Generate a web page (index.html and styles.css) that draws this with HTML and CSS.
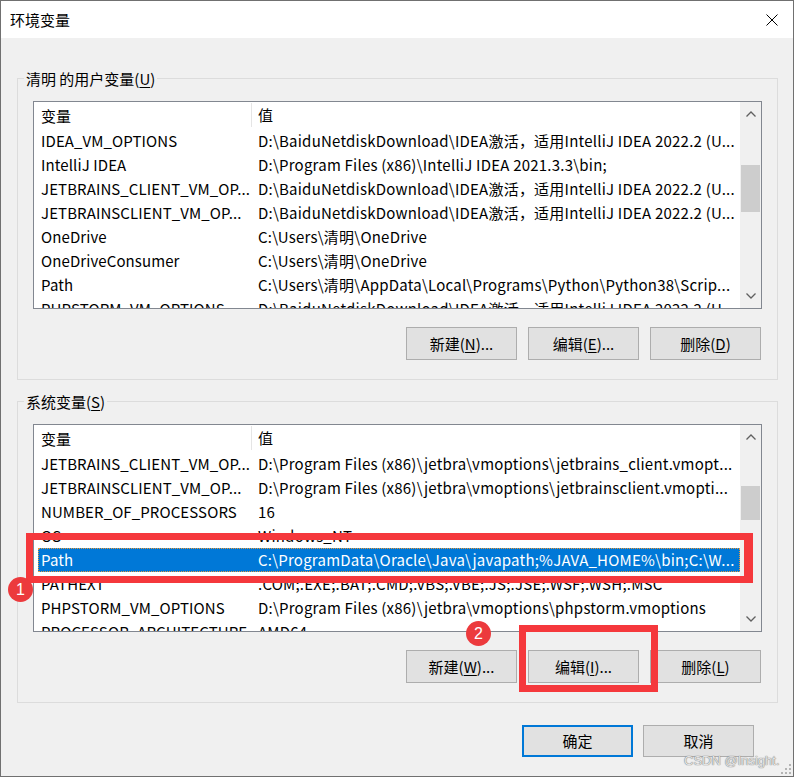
FILE: index.html
```html
<!DOCTYPE html>
<html lang="zh-CN">
<head>
<meta charset="utf-8">
<title>环境变量</title>
<link rel="stylesheet" href="styles.css">
</head>
<body>
<div class="window">
  <div class="titlebar">
    <span class="title">环境变量</span>
    <span class="close"><svg width="12" height="12" viewBox="0 0 12 12"><path d="M0.5 0.5 L11.5 11.5 M11.5 0.5 L0.5 11.5" stroke="#000" stroke-width="1" fill="none"/></svg></span>
  </div>
  <div class="body">
    <fieldset class="group">
      <legend>清明 的用户变量(<u>U</u>)</legend>
      <div class="list">
        <div class="table">
          <div class="row head"><span class="c1">变量</span><span class="c2">值</span></div>
          <div class="row"><span class="c1">IDEA_VM_OPTIONS</span><span class="c2">D:\BaiduNetdiskDownload\IDEA激活，适用IntelliJ IDEA 2022.2 (U...</span></div>
          <div class="row"><span class="c1">IntelliJ IDEA</span><span class="c2">D:\Program Files (x86)\IntelliJ IDEA 2021.3.3\bin;</span></div>
          <div class="row"><span class="c1">JETBRAINS_CLIENT_VM_OP...</span><span class="c2">D:\BaiduNetdiskDownload\IDEA激活，适用IntelliJ IDEA 2022.2 (U...</span></div>
          <div class="row"><span class="c1">JETBRAINSCLIENT_VM_OP...</span><span class="c2">D:\BaiduNetdiskDownload\IDEA激活，适用IntelliJ IDEA 2022.2 (U...</span></div>
          <div class="row"><span class="c1">OneDrive</span><span class="c2">C:\Users\清明\OneDrive</span></div>
          <div class="row"><span class="c1">OneDriveConsumer</span><span class="c2">C:\Users\清明\OneDrive</span></div>
          <div class="row"><span class="c1">Path</span><span class="c2">C:\Users\清明\AppData\Local\Programs\Python\Python38\Scrip...</span></div>
          <div class="row"><span class="c1">PHPSTORM_VM_OPTIONS</span><span class="c2">D:\BaiduNetdiskDownload\IDEA激活，适用IntelliJ IDEA 2022.2 (U...</span></div>
        </div>
        <div class="scrollbar">
          <div class="arrow"><svg width="10" height="6" viewBox="0 0 10 6"><path d="M0.5 5.5 L5 1 L9.5 5.5" stroke="#606060" stroke-width="1.3" fill="none"/></svg></div>
          <div class="track"><div class="thumb" style="margin-top:39px;height:47px"></div></div>
          <div class="arrow"><svg width="10" height="6" viewBox="0 0 10 6"><path d="M0.5 0.5 L5 5 L9.5 0.5" stroke="#606060" stroke-width="1.3" fill="none"/></svg></div>
        </div>
      </div>
      <div class="buttons">
        <button class="btn">新建(<u>N</u>)...</button>
        <button class="btn">编辑(<u>E</u>)...</button>
        <button class="btn">删除(<u>D</u>)</button>
      </div>
    </fieldset>

    <fieldset class="group group-sys">
      <legend>系统变量(<u>S</u>)</legend>
      <div class="list">
        <div class="table">
          <div class="row head"><span class="c1">变量</span><span class="c2">值</span></div>
          <div class="row"><span class="c1">JETBRAINS_CLIENT_VM_OP...</span><span class="c2">D:\Program Files (x86)\jetbra\vmoptions\jetbrains_client.vmopt...</span></div>
          <div class="row"><span class="c1">JETBRAINSCLIENT_VM_OP...</span><span class="c2">D:\Program Files (x86)\jetbra\vmoptions\jetbrainsclient.vmopti...</span></div>
          <div class="row"><span class="c1">NUMBER_OF_PROCESSORS</span><span class="c2">16</span></div>
          <div class="row"><span class="c1">OS</span><span class="c2">Windows_NT</span></div>
          <div class="row selected"><span class="c1">Path</span><span class="c2">C:\ProgramData\Oracle\Java\javapath;%JAVA_HOME%\bin;C:\W...</span></div>
          <div class="row"><span class="c1">PATHEXT</span><span class="c2">.COM;.EXE;.BAT;.CMD;.VBS;.VBE;.JS;.JSE;.WSF;.WSH;.MSC</span></div>
          <div class="row"><span class="c1">PHPSTORM_VM_OPTIONS</span><span class="c2">D:\Program Files (x86)\jetbra\vmoptions\phpstorm.vmoptions</span></div>
          <div class="row"><span class="c1">PROCESSOR_ARCHITECTURE</span><span class="c2">AMD64</span></div>
        </div>
        <div class="scrollbar">
          <div class="arrow"><svg width="10" height="6" viewBox="0 0 10 6"><path d="M0.5 5.5 L5 1 L9.5 5.5" stroke="#606060" stroke-width="1.3" fill="none"/></svg></div>
          <div class="track"><div class="thumb" style="margin-top:37px;height:34px"></div></div>
          <div class="arrow"><svg width="10" height="6" viewBox="0 0 10 6"><path d="M0.5 0.5 L5 5 L9.5 0.5" stroke="#606060" stroke-width="1.3" fill="none"/></svg></div>
        </div>
      </div>
      <div class="buttons">
        <button class="btn">新建(<u>W</u>)...</button>
        <button class="btn">编辑(<u>I</u>)...</button>
        <button class="btn">删除(<u>L</u>)</button>
      </div>
    </fieldset>

    <div class="footer">
      <button class="btn primary">确定</button>
      <button class="btn">取消</button>
    </div>
  </div>

  <div class="mark mark-row"></div>
  <div class="mark mark-btn"></div>
  <span class="badge badge-1">1</span>
  <span class="badge badge-2">2</span>
  <span class="watermark">CSDN @Insight.</span>
  <svg class="grip" width="12" height="12" viewBox="0 0 12 12">
    <rect x="9" y="1" width="2" height="2" fill="#b4b4b4"/>
    <rect x="5" y="5" width="2" height="2" fill="#b4b4b4"/>
    <rect x="9" y="5" width="2" height="2" fill="#b4b4b4"/>
    <rect x="1" y="9" width="2" height="2" fill="#b4b4b4"/>
    <rect x="5" y="9" width="2" height="2" fill="#b4b4b4"/>
    <rect x="9" y="9" width="2" height="2" fill="#b4b4b4"/>
  </svg>
</div>
</body>
</html>
```

FILE: styles.css
```css
* { box-sizing: border-box; }

html, body {
  margin: 0;
  padding: 0;
  background: #f0f0f0;
}

body {
  font-family: "Noto Sans CJK SC", "Noto Sans", sans-serif;
  font-size: 15px;
  color: #000;
}

.window {
  position: relative;
  width: 794px;
  height: 777px;
  border: 1px solid #707070;
  background: #f0f0f0;
  overflow: hidden;
}

.titlebar {
  height: 37px;
  background: #fff;
  display: flex;
  align-items: center;
  justify-content: space-between;
  padding-left: 9px;
}

.title {
  font-size: 15px;
  line-height: 20px;
}

.close {
  width: 42px;
  height: 37px;
  display: flex;
  align-items: center;
  justify-content: center;
}

.close svg { display: block; }

.body {
  padding: 30px 15px 0 16px;
}

.group {
  margin: 0;
  min-width: 0;
  border: 1px solid #dcdcdc;
  padding: 12px 15px 19px 15px;
}

.group-sys {
  margin-top: 11px;
}

.group legend {
  margin-left: -9px;
  padding: 0 2px;
  line-height: 21px;
  height: 21px;
  font-size: 15px;
}

u { text-decoration: underline; text-underline-offset: 2px; }

.list {
  height: 208px;
  border: 1px solid #828790;
  background: #fff;
  display: flex;
}

.table {
  flex: 1;
  min-width: 0;
  overflow: hidden;
}

.row {
  display: grid;
  grid-template-columns: 213px 1fr;
  margin-left: 4px;
  height: 24px;
  line-height: 24px;
  white-space: nowrap;
}

.row .c1 {
  padding-left: 3px;
  overflow: hidden;
  text-overflow: clip;
  letter-spacing: 0.1px;
}

.row .c2 {
  padding-left: 7px;
  overflow: hidden;
  text-overflow: clip;
  letter-spacing: 0.22px;
}

.row.head {
  height: 27px;
  line-height: 27px;
}

.row.head .c2 {
  border-left: 1px solid #e5e5e5;
  padding-left: 6px;
  margin: 1px 0 2px;
  line-height: 24px;
}

.row.selected {
  background: #0078d7;
  color: #fff;
  outline: 1px dotted #e89a3c;
  outline-offset: -1px;
}

.scrollbar {
  width: 21px;
  flex: none;
  background: #f0f0f0;
  display: flex;
  flex-direction: column;
}

.arrow {
  height: 24px;
  display: flex;
  align-items: center;
  justify-content: center;
  flex: none;
}

.arrow svg { display: block; }

.track {
  flex: 1;
  padding: 0 1px;
}

.thumb {
  background: #cdcdcd;
}

.buttons {
  margin-top: 18px;
  display: flex;
  justify-content: flex-end;
  gap: 11px;
  padding-right: 1px;
}

.btn {
  width: 111px;
  height: 33px;
  border: 1px solid #adadad;
  background: #e1e1e1;
  font-family: inherit;
  font-size: 15px;
  color: #000;
  padding: 0;
  line-height: 20px;
}

.footer {
  margin-top: 22px;
  display: flex;
  justify-content: flex-end;
  gap: 10px;
  padding-right: 24px;
}

.footer .btn { height: 32px; }

.btn.primary {
  border: 2px solid #0078d7;
}

/* annotation overlays */
.mark {
  position: absolute;
  border: 7px solid #f5383c;
}

.mark-row {
  left: 25px;
  top: 532px;
  width: 727px;
  height: 50px;
  border-right-width: 9px;
}

.mark-btn {
  left: 518px;
  top: 624px;
  width: 139px;
  height: 67px;
}

.badge {
  position: absolute;
  width: 25px;
  height: 25px;
  border-radius: 50%;
  background: #ec3a3d;
  color: #fff;
  font-family: "Liberation Sans", Arial, sans-serif;
  font-size: 16px;
  line-height: 25px;
  text-align: center;
}

.badge-1 { left: 7px; top: 576px; }
.badge-2 { left: 465px; top: 620px; }

.watermark {
  position: absolute;
  left: 683px;
  top: 751px;
  font-family: "Liberation Sans", Arial, sans-serif;
  font-size: 13px;
  line-height: 17px;
  color: #e4e4e4;
  text-shadow: 0 0 1px #7a7a7a, 0 0 1px #7a7a7a;
}

.grip {
  position: absolute;
  right: 1px;
  bottom: 1px;
}
```
